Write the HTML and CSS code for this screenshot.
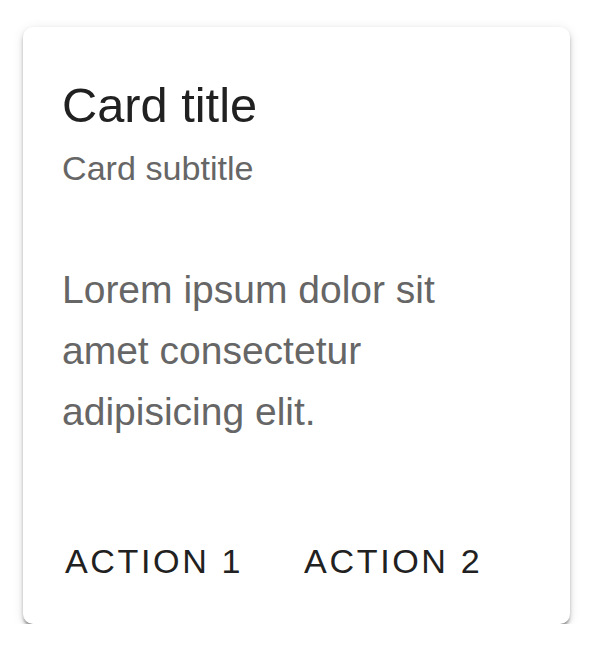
FILE: index.html
```html
<!DOCTYPE html>
<html lang="en">
<head>
<meta charset="utf-8">
<title>Card</title>
<link rel="stylesheet" href="styles.css">
</head>
<body>
<div class="page">
  <div class="card">
    <div class="card-header">
      <div class="card-title">Card title</div>
      <div class="card-subtitle">Card subtitle</div>
    </div>
    <div class="card-text">Lorem ipsum dolor sit amet consectetur adipisicing elit.</div>
    <div class="card-actions">
      <button class="btn">Action 1</button>
      <button class="btn">Action 2</button>
    </div>
  </div>
</div>
</body>
</html>
```
FILE: styles.css
```css
html, body {
  margin: 0;
  padding: 0;
  background: #ffffff;
}

.page {
  padding: 27px 0 0 23px;
  font-family: "Liberation Sans", Arial, sans-serif;
}

.card {
  width: 547px;
  box-sizing: border-box;
  background: #ffffff;
  border-radius: 10px;
  box-shadow:
    0 4px 3px -1px rgba(0, 0, 0, 0.3),
    0 3px 5px 0 rgba(0, 0, 0, 0.16),
    0 2px 12px 0 rgba(0, 0, 0, 0.1);
  padding-bottom: 19px;
}

.card-header {
  padding: 39px 39px 0 39px;
}

.card-title {
  font-size: 48.75px;
  line-height: 78px;
  color: #212121;
}

.card-subtitle {
  font-size: 34.125px;
  line-height: 48.75px;
  color: #666666;
}

.card-text {
  margin-top: 66px;
  padding: 0 39px;
  width: 440px;
  font-size: 39px;
  line-height: 61px;
  color: #666666;
}

.card-actions {
  margin-top: 75px;
  padding-left: 22px;
  display: flex;
  gap: 21px;
}

.btn {
  height: 88px;
  padding: 0 20px;
  border: 0;
  background: transparent;
  font-family: "Liberation Sans", Arial, sans-serif;
  font-size: 34.125px;
  letter-spacing: 2.6px;
  text-transform: uppercase;
  color: #212121;
  line-height: 88px;
  border-radius: 10px;
}
```
